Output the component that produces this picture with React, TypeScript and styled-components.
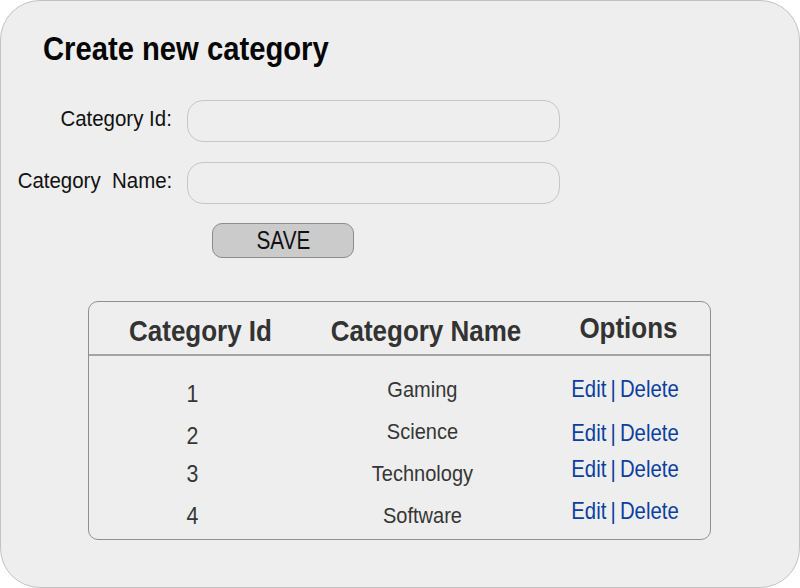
import React from "react";
import styled, { createGlobalStyle } from "styled-components";

const GlobalStyle = createGlobalStyle`
  html, body { margin: 0; padding: 0; background: #ffffff; }
  * { box-sizing: border-box; }
  body { font-family: "Liberation Sans", Arial, Helvetica, sans-serif; }
`;

const Frame = styled.div`
  width: 800px;
  height: 588px;
  border: 1px solid #c2c2c2;
  border-radius: 40px;
  background: #eeeeee;
  display: flex;
  flex-direction: column;
  align-items: flex-start;
  overflow: hidden;
`;

const Title = styled.h1`
  margin: 31px 0 0 42px;
  font-size: 33px;
  line-height: 33px;
  font-weight: 700;
  color: #050505;
  white-space: nowrap;
  transform: scaleX(0.885);
  transform-origin: left center;
`;

const Form = styled.div`
  margin-top: 35px;
  display: grid;
  grid-template-columns: 171px 373px;
  grid-auto-rows: 42px;
  column-gap: 15px;
  row-gap: 20px;
  align-items: center;
`;

const Label = styled.label`
  justify-self: end;
  font-size: 22px;
  line-height: 22px;
  color: #111111;
  white-space: pre;
  margin-top: -4px;
  transform: scaleX(0.93);
  transform-origin: right center;
`;

const Field = styled.div`
  height: 42px;
  border: 1px solid #c6c6c6;
  border-radius: 16px;
  background: #eeeeee;
`;

const SaveButton = styled.button`
  margin: 19px 0 0 211px;
  width: 142px;
  height: 35px;
  border: 1px solid #8c8c8c;
  border-radius: 10px;
  background: #cbcbcb;
  font-family: inherit;
  color: #111111;
  padding: 0;
  display: flex;
  align-items: center;
  justify-content: center;
`;

const ButtonText = styled.span`
  display: inline-block;
  font-size: 25px;
  line-height: 25px;
  transform: scaleX(0.83);
`;

const Table = styled.div`
  margin: 43px 0 0 87px;
  width: 623px;
  height: 239px;
  border: 1px solid #909090;
  border-radius: 10px;
  display: flex;
  flex-direction: column;
`;

const HeaderRow = styled.div`
  height: 54px;
  border-bottom: 2px solid #a4a4a4;
  display: grid;
  grid-template-columns: 223px 228px 1fr;
  align-items: center;
`;

const HeaderCell = styled.div<{ $dy?: number; $dx?: number }>`
  text-align: center;
  white-space: nowrap;
  font-size: 30px;
  line-height: 30px;
  font-weight: 700;
  color: #333333;
  margin-top: ${(p) => (p.$dy ?? 0) * 2}px;
  padding-left: ${(p) => (p.$dx ?? 0) * 2}px;
  transform: scaleX(0.866);
`;

const Body = styled.div`
  padding-top: 13px;
  display: flex;
  flex-direction: column;
`;

const Row = styled.div`
  height: 42px;
  display: grid;
  grid-template-columns: 223px 228px 1fr;
  align-items: center;
`;

const Cell = styled.div<{ $dy?: number; $dx?: number }>`
  text-align: center;
  white-space: nowrap;
  font-size: 22.5px;
  line-height: 22.5px;
  color: #363636;
  margin-top: ${(p) => (p.$dy ?? 0) * 2}px;
  padding-right: ${(p) => (p.$dx ?? 0) * 2}px;
  transform: scaleX(0.89);
`;

const IdCell = styled(Cell)`
  font-size: 24px;
  line-height: 24px;
`;

const Options = styled(Cell)`
  font-size: 24.5px;
  line-height: 24.5px;
  color: #0b3f9f;
  transform: scaleX(0.83);
`;

const Sep = styled.span`
  margin: 0 5px;
`;

const rows = [
  { id: 1, name: "Gaming", idDy: 4, nameDy: 0, optDy: -1 },
  { id: 2, name: "Science", idDy: 4, nameDy: 0, optDy: 1 },
  { id: 3, name: "Technology", idDy: 0, nameDy: 0, optDy: -5 },
  { id: 4, name: "Software", idDy: 0, nameDy: 0, optDy: -5 },
];

export default function App() {
  return (
    <>
      <GlobalStyle />
      <Frame>
        <Title>Create new category</Title>
        <Form>
          <Label>Category Id:</Label>
          <Field />
          <Label>{"Category  Name:"}</Label>
          <Field />
        </Form>
        <SaveButton>
          <ButtonText>SAVE</ButtonText>
        </SaveButton>
        <Table>
          <HeaderRow>
            <HeaderCell $dy={3}>Category Id</HeaderCell>
            <HeaderCell $dy={3}>Category Name</HeaderCell>
            <HeaderCell $dy={0} $dx={4}>Options</HeaderCell>
          </HeaderRow>
          <Body>
            {rows.map((r) => (
              <Row key={r.id}>
                <IdCell $dy={r.idDy} $dx={9}>{r.id}</IdCell>
                <Cell $dy={r.nameDy} $dx={4}>{r.name}</Cell>
                <Options $dy={r.optDy}>
                  Edit<Sep>|</Sep>Delete
                </Options>
              </Row>
            ))}
          </Body>
        </Table>
      </Frame>
    </>
  );
}
